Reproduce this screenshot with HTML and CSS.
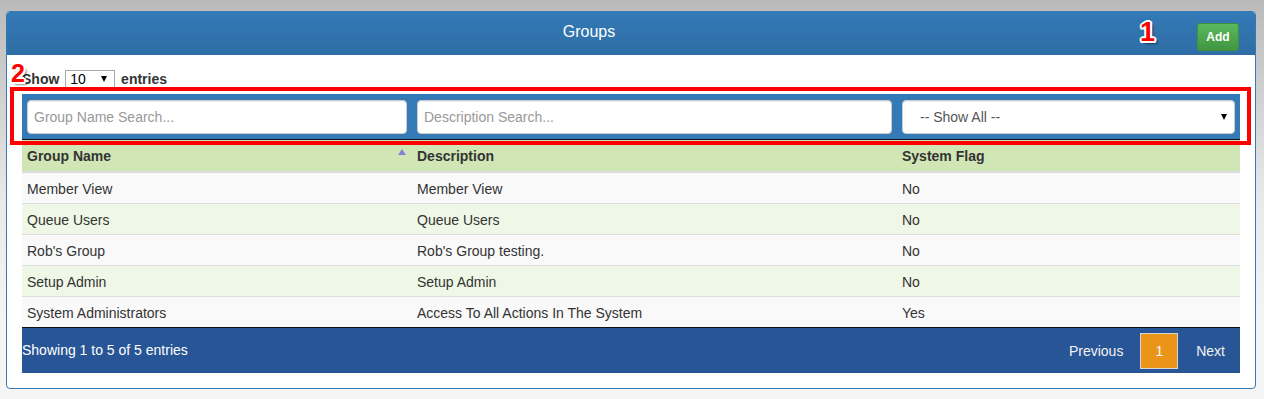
FILE: index.html
```html
<!DOCTYPE html>
<html lang="en">
<head>
  <meta charset="UTF-8">
  <title>Groups</title>
  <link rel="stylesheet" href="styles.css">
</head>
<body>
  <div class="panel">
    <div class="panel-heading">
      <div class="panel-title">Groups</div>
      <div class="panel-actions">
        <button class="btn-add">Add</button>
      </div>
    </div>

    <div class="panel-body">
      <div class="length">
        Show
        <span class="select-box">10<i class="caret"></i></span>
        entries
      </div>

      <table class="grid">
        <colgroup>
          <col class="col-name">
          <col class="col-desc">
          <col class="col-flag">
        </colgroup>
        <thead>
          <tr class="filters">
            <th><input type="text" placeholder="Group Name Search..."></th>
            <th><input type="text" placeholder="Description Search..."></th>
            <th><div class="select-wide">-- Show All --<i class="caret"></i></div></th>
          </tr>
          <tr class="heads">
            <th class="sorted">Group Name</th>
            <th>Description</th>
            <th>System Flag</th>
          </tr>
        </thead>
        <tbody>
          <tr><td>Member View</td><td>Member View</td><td>No</td></tr>
          <tr><td>Queue Users</td><td>Queue Users</td><td>No</td></tr>
          <tr><td>Rob's Group</td><td>Rob's Group testing.</td><td>No</td></tr>
          <tr><td>Setup Admin</td><td>Setup Admin</td><td>No</td></tr>
          <tr><td>System Administrators</td><td>Access To All Actions In The System</td><td>Yes</td></tr>
        </tbody>
      </table>

      <div class="grid-footer">
        <div class="info">Showing 1 to 5 of 5 entries</div>
        <div class="pager">
          <span class="page">Previous</span>
          <span class="page current">1</span>
          <span class="page next">Next</span>
        </div>
      </div>
    </div>

    <!-- annotations drawn over the screenshot -->
    <span class="mark mark-1">1</span>
    <span class="mark mark-2">2</span>
    <div class="highlight"></div>
  </div>
</body>
</html>
```

FILE: styles.css
```css
html {
  background: linear-gradient(#bababa 0, #e9e9e9 200px, #f5f5f5 330px);
  min-height: 100%;
}

body {
  margin: 11px 8px 0 6px;
  font-family: "Liberation Sans", Arial, sans-serif;
  font-size: 14px;
  color: #333;
}

.panel {
  position: relative;
  border: 1px solid #337ab7;
  border-radius: 4px;
  background: #fff;
}

.panel-heading {
  display: flex;
  height: 43px;
  background: linear-gradient(#337ab7, #2e6da4);
  border-radius: 3px 3px 0 0;
  color: #fff;
}

.panel-title {
  flex: 1;
  text-align: center;
  font-size: 16px;
  line-height: 40px;
}

.panel-actions {
  width: 68px;
  padding-right: 16px;
  display: flex;
  justify-content: flex-end;
}

.btn-add {
  margin-top: 11px;
  width: 42px;
  height: 28px;
  padding: 0;
  border: 1px solid #3e8f3e;
  border-radius: 3px;
  background: linear-gradient(#5cb85c, #419641);
  color: #fff;
  font-family: inherit;
  font-size: 12px;
  font-weight: bold;
}

.panel-body {
  padding: 15px 15px 15px;
}

.length {
  height: 18px;
  line-height: 18px;
  margin-bottom: 6px;
  font-weight: bold;
}

.select-box {
  display: inline-block;
  position: relative;
  vertical-align: top;
  box-sizing: border-box;
  width: 50px;
  height: 18px;
  margin: 0 2px;
  padding-left: 4px;
  border: 1px solid #a9a9a9;
  background: #fff;
  color: #000;
  font-weight: normal;
  line-height: 16px;
}

.caret {
  position: absolute;
  width: 0;
  height: 0;
  border-left: 3.5px solid transparent;
  border-right: 3.5px solid transparent;
  border-top: 6px solid #000;
}

.select-box .caret {
  right: 7px;
  top: 5px;
}

.grid {
  width: 100%;
  table-layout: fixed;
  border-collapse: collapse;
}

.col-name { width: 390px; }
.col-desc { width: 485px; }
.col-flag { width: 343px; }

.filters th {
  background: #337ab7;
  padding: 6px 5px 5px;
  border-bottom: 1px solid #111;
}

.filters input,
.select-wide {
  display: block;
  box-sizing: border-box;
  width: 100%;
  height: 34px;
  border: 1px solid #ccc;
  border-radius: 4px;
  background: #fff;
  box-shadow: inset 0 1px 1px rgba(0, 0, 0, 0.075);
  font-family: inherit;
  font-size: 14px;
  font-weight: normal;
  text-align: left;
}

.filters input {
  padding: 0 6px;
  color: #555;
}

.filters input::placeholder {
  color: #999;
}

.select-wide {
  position: relative;
  padding-left: 17px;
  line-height: 32px;
  color: #555;
}

.select-wide .caret {
  right: 7px;
  top: 13px;
}

.heads th {
  position: relative;
  background: #d0e6b5;
  padding: 6px 5px 5px;
  line-height: 20px;
  text-align: left;
  border-bottom: 2px solid #ddd;
}

.sorted::after {
  content: "";
  position: absolute;
  right: 6px;
  top: 9px;
  border-left: 4px solid transparent;
  border-right: 4px solid transparent;
  border-bottom: 6px solid #8383dc;
}

.grid td {
  padding: 6px 5px 4px;
  line-height: 20px;
  border-top: 1px solid #ddd;
  white-space: nowrap;
}

.grid tbody tr:first-child td {
  border-top: none;
}

.grid tbody tr:nth-child(odd) {
  background: #f9f9f9;
}

.grid tbody tr:nth-child(even) {
  background: #eff7e6;
}

.grid-footer {
  display: flex;
  justify-content: space-between;
  align-items: center;
  height: 45px;
  border-top: 1px solid #111;
  background: #285595;
  color: #fff;
  font-size: 14px;
}

.info {
  padding-bottom: 1px;
}

.pager {
  display: flex;
  align-self: flex-start;
  margin-top: 5px;
}

.page {
  box-sizing: border-box;
  height: 36px;
  line-height: 34px;
  padding: 0 15px;
  margin-left: 1px;
  border: 1px solid transparent;
  color: #f2f2f2;
}

.page.current {
  padding: 0 14px;
  background: #ea9418;
  border-color: #d6d6d6;
  color: #fff;
}

.page.next {
  padding: 0 14px 0 16px;
}

/* annotation overlay */
.mark {
  position: absolute;
  font-weight: bold;
  color: #f00;
  line-height: 1;
  text-shadow:
    2px 0 0 #fff, -2px 0 0 #fff, 0 2px 0 #fff, 0 -2px 0 #fff,
    1.5px 1.5px 0 #fff, -1.5px 1.5px 0 #fff, 1.5px -1.5px 0 #fff, -1.5px -1.5px 0 #fff,
    3px 3px 2px rgba(0, 0, 0, 0.45);
}

.mark-1 {
  left: 1133px;
  top: 7px;
  font-size: 27px;
}

.mark-2 {
  left: 4px;
  top: 49px;
  font-size: 25px;
}

.highlight {
  position: absolute;
  left: 3px;
  top: 75px;
  width: 1241px;
  height: 58px;
  box-sizing: border-box;
  border: 4px solid #f00;
}
```
